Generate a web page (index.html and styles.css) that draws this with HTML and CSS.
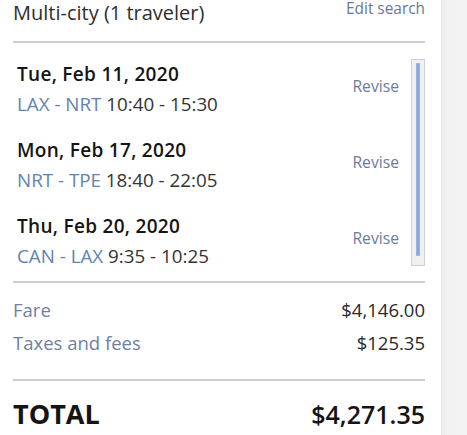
FILE: index.html
```html
<!DOCTYPE html>
<html lang="en">
<head>
<meta charset="utf-8">
<title>Trip summary</title>
<link rel="stylesheet" href="styles.css">
</head>
<body>
<div class="page">
  <section class="panel">
    <header class="header">
      <h1 class="title">Multi-city (1 traveler)</h1>
      <a class="edit" href="#">Edit search</a>
    </header>
    <div class="legs-wrap">
      <ul class="legs">
        <li class="leg">
          <div class="leg-info">
            <div class="date">Tue, Feb 11, 2020</div>
            <div class="route"><span class="airports">LAX - NRT</span> 10:40 - 15:30</div>
          </div>
          <a class="revise" href="#">Revise</a>
        </li>
        <li class="leg">
          <div class="leg-info">
            <div class="date">Mon, Feb 17, 2020</div>
            <div class="route"><span class="airports">NRT - TPE</span> 18:40 - 22:05</div>
          </div>
          <a class="revise" href="#">Revise</a>
        </li>
        <li class="leg">
          <div class="leg-info">
            <div class="date">Thu, Feb 20, 2020</div>
            <div class="route"><span class="airports">CAN - LAX</span> 9:35 - 10:25</div>
          </div>
          <a class="revise" href="#">Revise</a>
        </li>
      </ul>
      <div class="scrollbar"><div class="thumb"></div></div>
    </div>
    <div class="fees">
      <div class="fee-row"><span class="fee-label">Fare</span><span class="fee-value">$4,146.00</span></div>
      <div class="fee-row"><span class="fee-label">Taxes and fees</span><span class="fee-value">$125.35</span></div>
    </div>
    <div class="total">
      <span class="total-label">TOTAL</span>
      <span class="total-value">$4,271.35</span>
    </div>
  </section>
  <aside class="side"></aside>
</div>
</body>
</html>
```
FILE: styles.css
```css
* { box-sizing: border-box; }
html, body {
  margin: 0;
  padding: 0;
  height: 100%;
}
body {
  font-family: "Open Sans", "Noto Sans", sans-serif;
  background: #ffffff;
  overflow: hidden;
}
.page {
  display: flex;
  height: 435px;
}
.panel {
  width: 441px;
  flex: none;
  background: #ffffff;
  padding: 0 16px 0 13px;
}
.side {
  flex: 1;
  background: linear-gradient(to right, #e9e9e9 0, #f1f1f1 6px, #f3f3f3 100%);
}
.header {
  display: flex;
  justify-content: space-between;
  align-items: flex-start;
  height: 43px;
  border-bottom: 2px solid #cfcfcf;
}
.title {
  margin: 0;
  font-size: 20px;
  line-height: 26px;
  font-weight: 400;
  color: #2e2e2e;
}
.edit {
  font-size: 15.4px;
  line-height: 20px;
  margin-top: -1px;
  color: #6a7896;
  text-decoration: none;
}
.legs-wrap {
  display: flex;
  align-items: flex-start;
  padding: 16px 0 10px;
  border-bottom: 2px solid #cfcfcf;
}
.legs {
  list-style: none;
  margin: 0;
  padding: 0 12px 0 4px;
  flex: 1;
}
.leg {
  display: flex;
  justify-content: space-between;
  align-items: center;
  margin-bottom: 16px;
}
.leg:last-child { margin-bottom: 0; }
.date {
  font-size: 19px;
  line-height: 30px;
  font-weight: 600;
  letter-spacing: 0.3px;
  color: #151515;
}
.route {
  font-size: 18.8px;
  line-height: 30px;
  color: #333333;
}
.airports { color: #6282b0; }
.revise {
  font-size: 15.7px;
  line-height: 20px;
  margin-bottom: 7px;
  color: #6c7b98;
  text-decoration: none;
}
.scrollbar {
  width: 14px;
  height: 207px;
  flex: none;
  border: 1px solid #cdd0d4;
  background: #eef0f2;
  padding: 3px 4px;
}
.thumb {
  height: 193px;
  background: #86a6de;
  border: 1px solid #9fb6e0;
}
.fees {
  padding: 10px 0 20px;
  border-bottom: 2px solid #cfcfcf;
}
.fee-row {
  display: flex;
  justify-content: space-between;
  font-size: 18.5px;
  line-height: 33px;
}
.fee-label { color: #6f7fa1; }
.fee-value { color: #2a2a2a; }
.total {
  display: flex;
  justify-content: space-between;
  align-items: baseline;
  padding-top: 13px;
  line-height: 40px;
  color: #141414;
}
.total-label {
  font-size: 27px;
  font-weight: 700;
}
.total-value {
  font-size: 25px;
  font-weight: 600;
}
```
